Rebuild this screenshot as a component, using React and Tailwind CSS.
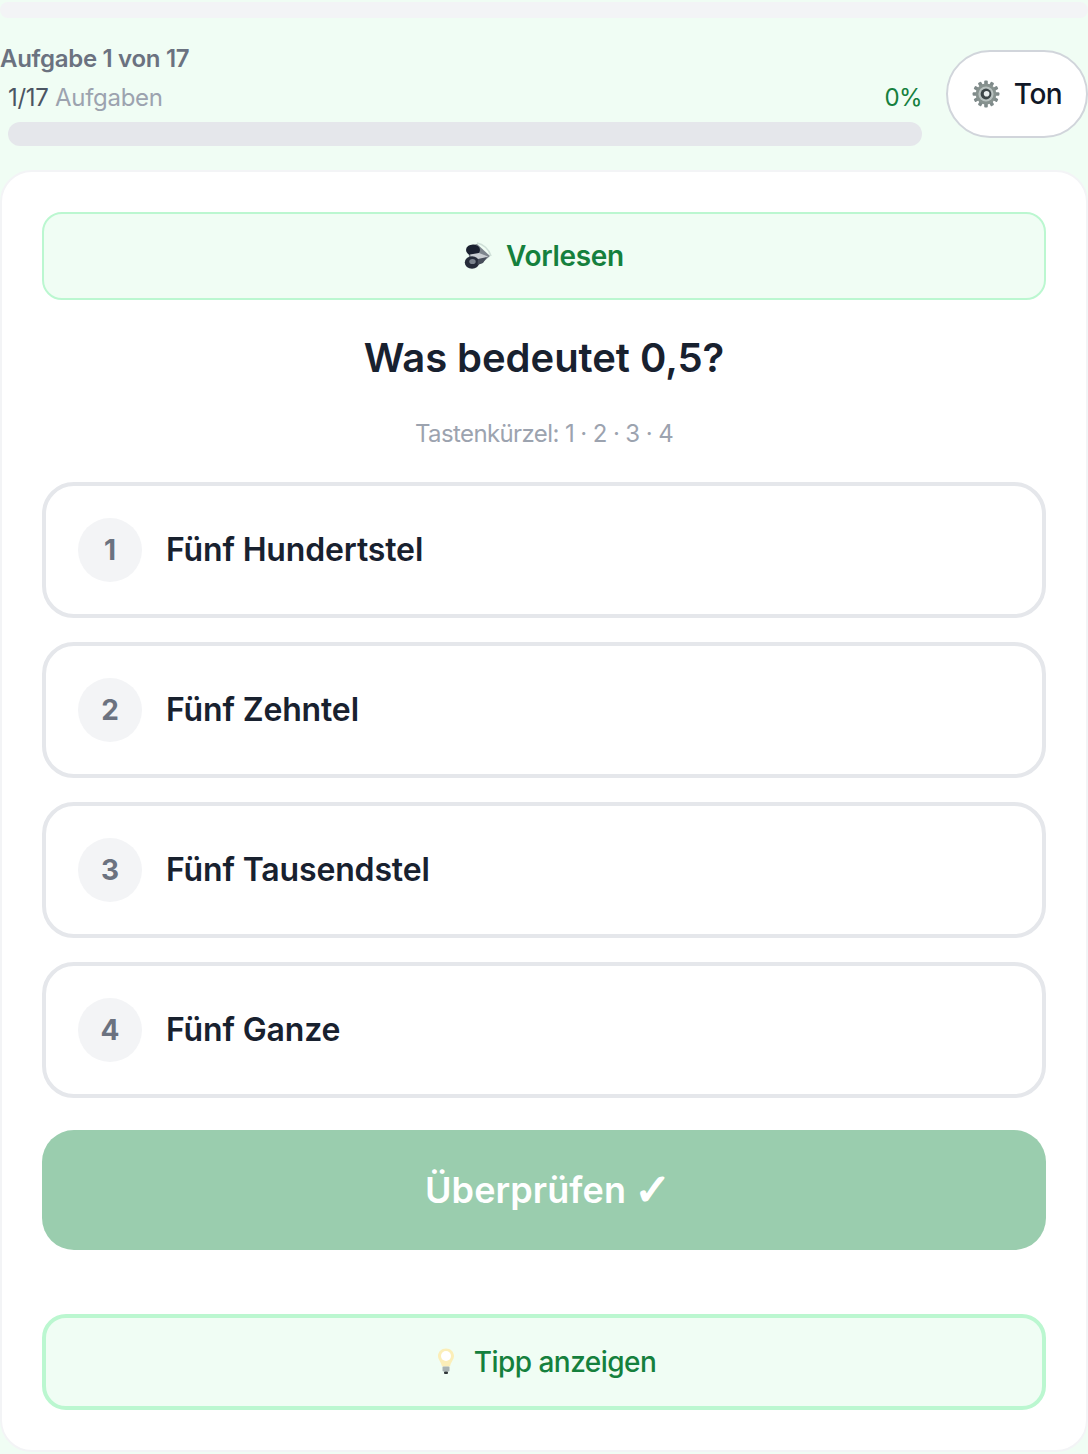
const options = [
  { key: 1, label: 'Fünf Hundertstel' },
  { key: 2, label: 'Fünf Zehntel' },
  { key: 3, label: 'Fünf Tausendstel' },
  { key: 4, label: 'Fünf Ganze' },
];

const GearIcon = () => (
  <svg width="28" height="28" viewBox="0 0 28 28" className="shrink-0">
    <g fill="#7f8a8a">
      {[0, 30, 60, 90, 120, 150, 180, 210, 240, 270, 300, 330].map((a) => (
        <rect key={a} x="12.2" y="0.6" width="3.6" height="5" rx="1" transform={`rotate(${a} 14 14)`} />
      ))}
    </g>
    <circle cx="14" cy="14" r="10.4" fill="#87928f" />
    <circle cx="14" cy="14" r="7.6" fill="#b9c2c0" />
    <circle cx="14" cy="14" r="5.4" fill="#3d4648" />
    <circle cx="14.6" cy="13.8" r="2.8" fill="#e9eeee" />
  </svg>
);

const SpeakerIcon = () => (
  <svg width="28" height="28" viewBox="0 0 28 28" className="shrink-0">
    <path d="M13 1c6 1 12 6 14 13" fill="none" stroke="#cfe0d8" strokeWidth="1.6" />
    <path d="M4 4 13 2l13 12-8 7-12 5z" fill="#7d858d" />
    <ellipse cx="9" cy="8" rx="7" ry="5.6" fill="#1b2130" />
    <path d="M6 12.5 15 11l9 3.5-7 3.5-9-.5z" fill="#c9ced2" />
    <ellipse cx="8" cy="20.5" rx="7.2" ry="6.2" fill="#262c3a" />
    <ellipse cx="8.5" cy="19.5" rx="3.2" ry="2.6" fill="#7b838d" />
    <path d="M14 17l9-2-4 6-5.5 2z" fill="#474e5a" />
  </svg>
);

const BulbIcon = () => (
  <svg width="28" height="30" viewBox="0 0 28 30" className="shrink-0">
    <path d="M14 1.5c-4.6 0-8 3.4-8 7.6 0 3.6 3 5.6 4 10.4h8c1-4.8 4-6.8 4-10.4 0-4.2-3.4-7.6-8-7.6z" fill="#fbeeb8" />
    <circle cx="14" cy="9" r="5" fill="#ffffff" />
    <rect x="10.5" y="19.5" width="7" height="5" rx="1" fill="#a9b3b3" />
    <rect x="12" y="24.5" width="4" height="2.5" rx="1" fill="#2f3638" />
  </svg>
);

const App = () => {
  return (
    <div className="w-[1088px] h-[1454px] bg-[#f0fdf4] overflow-hidden font-['Inter',sans-serif]">
      {/* Top strip */}
      <div className="h-4 mt-0.5 bg-[#f3f4f6] rounded-lg" />

      {/* Header */}
      <div className="flex items-end h-[128px]">
        <div className="flex-1 min-w-0">
          <p className="text-2xl leading-8 font-semibold text-[#6b7280] tracking-[-0.3px]">Aufgabe 1 von 17</p>
          <div className="ml-2 mr-6">
            <div className="flex justify-between items-center mt-[7px] h-8 text-2xl">
              <span className="text-[#9ca3af] tracking-[-0.3px]"><span className="text-[#4b5563]">1/17</span> Aufgaben</span>
              <span className="text-[#15803d] tracking-[-0.6px]">0%</span>
            </div>
            <div className="h-6 mt-2 rounded-xl bg-[#e5e7eb]" />
          </div>
        </div>
        <div className="w-[142px] h-[88px] mb-2 flex items-center justify-center gap-3.5 bg-white border-2 border-[#d1d5db] rounded-[44px]">
          <GearIcon />
          <span className="text-[28px] font-medium text-[#111827] tracking-[-0.5px]">Ton</span>
        </div>
      </div>

      {/* Card */}
      <div className="mt-6 h-[1282px] px-10 pt-10 bg-white border-2 border-[#f3f4f6] rounded-[32px]">
        <div className="h-[88px] flex items-center justify-center gap-3.5 bg-[#f0fdf4] border-2 border-[#bbf7d0] rounded-[20px]">
          <SpeakerIcon />
          <span className="text-[28px] font-semibold text-[#15803d] tracking-[-0.3px]">Vorlesen</span>
        </div>

        <h1 className="mt-[34px] text-center text-[40px] leading-[48px] font-semibold text-[#18212f] tracking-[-0.05px]">Was bedeutet 0,5?</h1>
        <p className="mt-9 text-center text-2xl leading-8 text-[#9ca3af] tracking-[-0.6px]">Tastenkürzel: 1 · 2 · 3 · 4</p>

        <div className="mt-8 flex flex-col gap-6">
          {options.map((opt) => (
            <div key={opt.key} className="h-[136px] flex items-center gap-6 px-8 border-4 border-[#e5e7eb] rounded-[32px]">
              <div className="w-16 h-16 rounded-full bg-[#f3f4f6] flex items-center justify-center text-[28px] font-bold text-[#6b7280]">
                {opt.key}
              </div>
              <span className="text-[32px] font-semibold text-[#18212f] tracking-[-0.15px]">{opt.label}</span>
            </div>
          ))}
        </div>

        <div className="mt-8 h-[120px] pl-2 flex items-center justify-center gap-2 bg-[#9acdae] rounded-[32px] text-[36px] font-semibold text-white">
          <span className="tracking-[0.1px]">Überprüfen</span>
          <span className="font-['DejaVu_Sans',sans-serif] text-[44px] leading-none [-webkit-text-stroke:1.5px_white]">✓</span>
        </div>

        <div className="mt-16 h-24 flex items-center justify-center gap-3.5 bg-[#f0fdf4] border-4 border-[#bbf7d0] rounded-3xl">
          <BulbIcon />
          <span className="text-[28px] font-medium text-[#15803d] tracking-[-0.55px]">Tipp anzeigen</span>
        </div>
      </div>
    </div>
  );
};

export default App;
